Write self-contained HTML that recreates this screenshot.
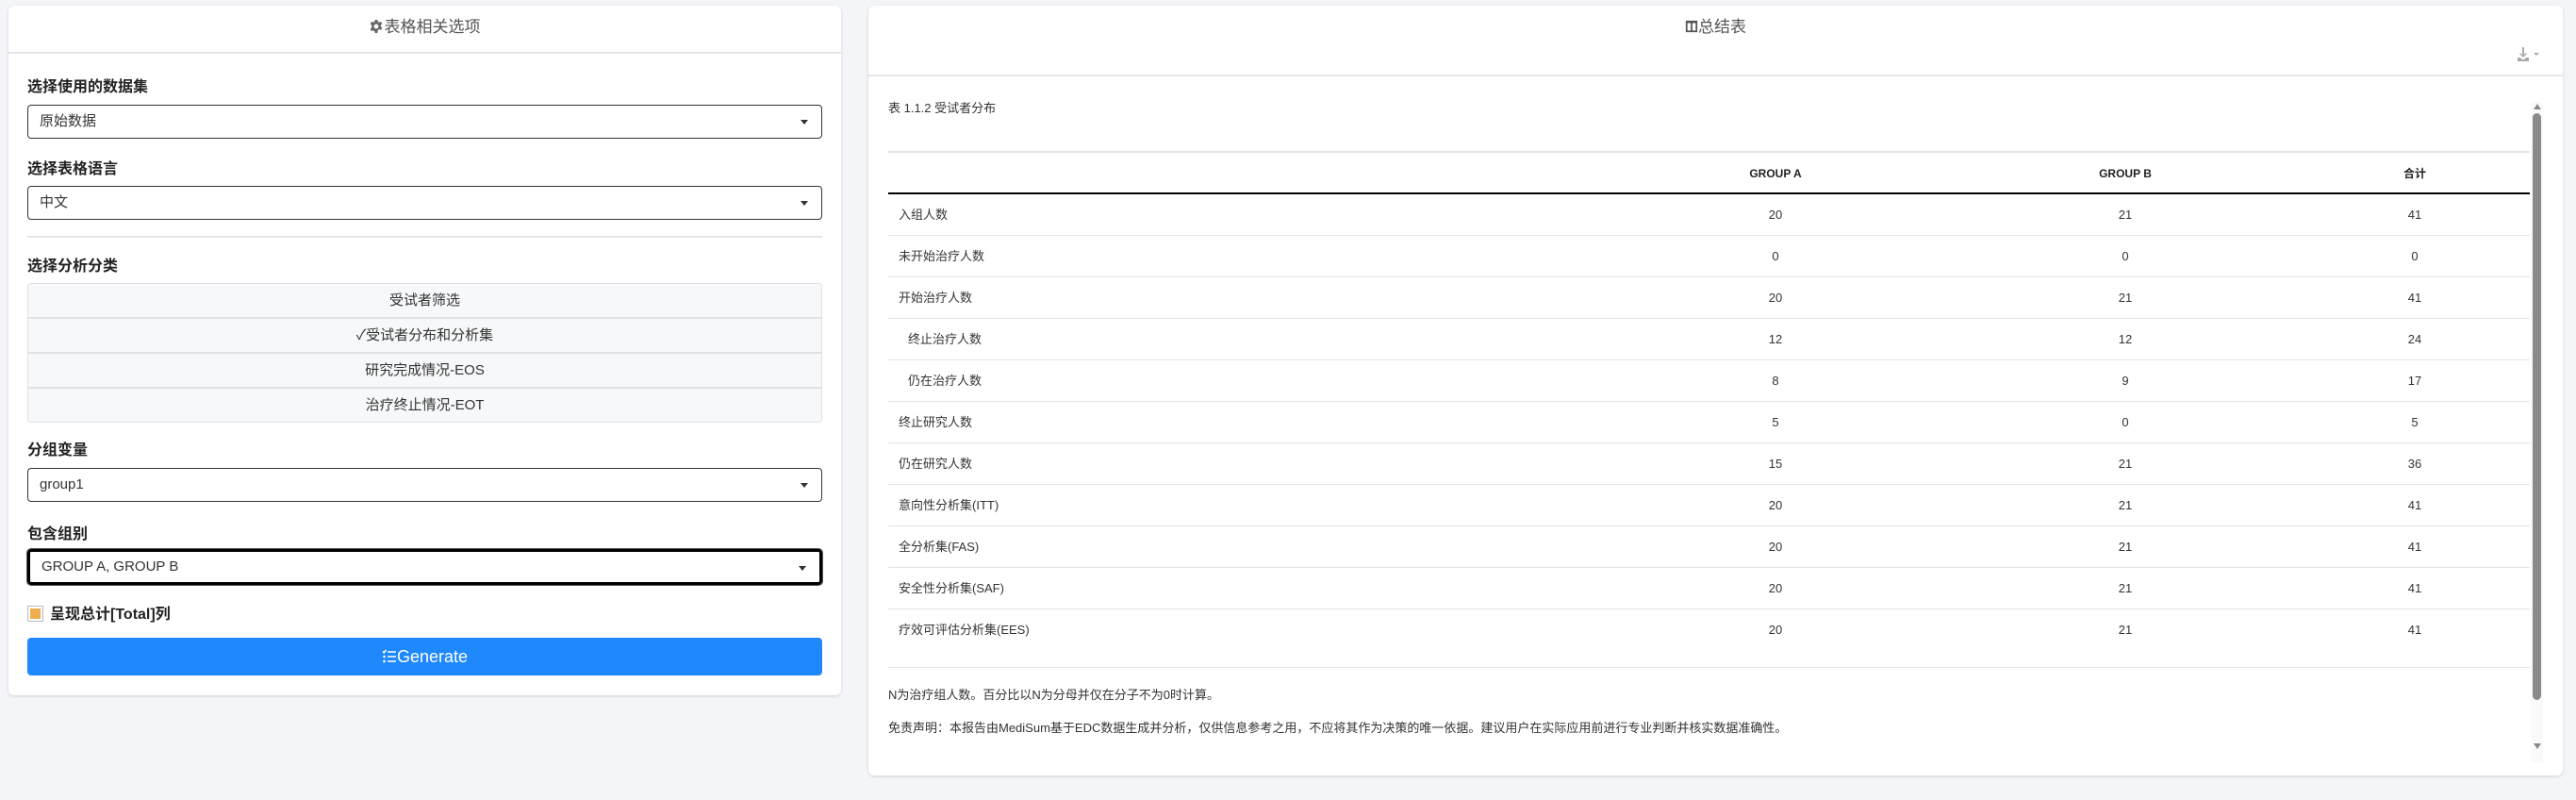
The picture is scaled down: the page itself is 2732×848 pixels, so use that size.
<!DOCTYPE html>
<html><head><meta charset="utf-8"><style>
*{box-sizing:border-box;margin:0;padding:0}
body{width:2732px;height:848px;background:#f4f5f9;font-family:"Liberation Sans","Noto Sans CJK SC",sans-serif;color:#222;position:relative;overflow:hidden}
.abs{position:absolute}
.card{position:absolute;background:#fff;border-radius:6px;box-shadow:0 1px 3px rgba(0,0,0,.15)}
.hdr{position:absolute;left:0;right:0;top:0;border-bottom:2px solid #e6e7ea;text-align:center;color:#555;font-size:17px}
.lbl{position:absolute;left:29px;font-size:16px;font-weight:bold;color:#222;line-height:20px}
.sel{position:absolute;left:29px;width:843px;height:36px;border:1.5px solid #333;border-radius:4px;font-size:15px;color:#333;padding:0 12px;line-height:33px}
.sel:after{content:"";position:absolute;right:14px;top:15px;border:4px solid transparent;border-top:5px solid #333}
.li{position:absolute;left:29px;width:843px;height:37px;background:#f7f8fa;border:1px solid #dfe1e5;text-align:center;font-size:15px;color:#333;line-height:35px}
.row{position:absolute;left:942px;width:1741px;height:44px;line-height:44px;border-bottom:1.5px solid #e3e4e6;font-size:13px;color:#333}
.row span{position:absolute;top:0;line-height:44px}
.c1{left:11px}.c2{left:900px;width:82px;text-align:center}.c3{left:1271px;width:82px;text-align:center}.c4{left:1578px;width:82px;text-align:center}
</style></head><body>

<div class="card" style="left:9px;top:6px;width:883px;height:731px">
 <div class="hdr" style="height:51px;line-height:45px">
  <svg width="14" height="14" viewBox="0 0 16 16" style="vertical-align:-1px;margin-right:2px"><path fill="#666" d="M6.5 0h3l.5 2.2 1.6.9 2.1-.8 1.5 2.6-1.7 1.5v1.8l1.7 1.5-1.5 2.6-2.1-.8-1.6.9L9.5 16h-3L6 13.8l-1.6-.9-2.1.8L.8 11.1 2.5 9.6V6.4L.8 4.9 2.3 2.3l2.1.8L6 2.2zM8 5.2A2.8 2.8 0 1 0 8 10.8 2.8 2.8 0 0 0 8 5.2z"/></svg>表格相关选项
 </div>
</div>
<div class="lbl" style="top:83px">选择使用的数据集</div>
<div class="sel" style="top:111px">原始数据</div>
<div class="lbl" style="top:170px">选择表格语言</div>
<div class="sel" style="top:197px">中文</div>
<div class="abs" style="left:29px;top:250px;width:843px;height:1.5px;background:#e3e4e6"></div>
<div class="lbl" style="top:273px">选择分析分类</div>
<div class="li" style="top:300px;border-radius:4px 4px 0 0">受试者筛选</div>
<div class="li" style="top:337px">✓受试者分布和分析集</div>
<div class="li" style="top:374px">研究完成情况-EOS</div>
<div class="li" style="top:411px;border-radius:0 0 4px 4px">治疗终止情况-EOT</div>
<div class="lbl" style="top:468px">分组变量</div>
<div class="sel" style="top:496px">group1</div>
<div class="lbl" style="top:557px">包含组别</div>
<div class="sel" style="top:582px;height:38px;border:3px solid #000;box-shadow:0 0 0 1px #555;line-height:32px">GROUP A, GROUP B</div>
<div class="abs" style="left:29px;top:642px;width:17px;height:17px;border:1px solid #bbb;background:#fff"><div style="margin:2px;width:11px;height:11px;background:#f0ad4e"></div></div>
<div class="lbl" style="left:53px;top:642px">呈现总计[Total]列</div>
<div class="abs" style="left:29px;top:676px;width:843px;height:40px;background:#1e88fc;border-radius:4px;color:#fff;font-size:18px;text-align:center;line-height:40px">
 <svg width="16" height="16" viewBox="0 0 16 16" style="vertical-align:-2px"><path fill="none" stroke="#fff" stroke-width="1.6" d="M1 2.5l1.3 1.3L4.5 1M6 3h9M6 8h9M6 13h9"/><circle cx="2.5" cy="8" r="1.3" fill="#fff"/><circle cx="2.5" cy="13" r="1.3" fill="#fff"/></svg>Generate
</div>

<div class="card" style="left:921px;top:6px;width:1797px;height:816px">
 <div class="hdr" style="height:75px;line-height:45px">
  <svg width="14" height="14" viewBox="0 0 16 16" style="vertical-align:-1px"><path fill="#555" d="M1 1h14v14H1zM3 4v9h4V4zm6 0v9h4V4z"/></svg>总结表
 </div>
 <svg class="abs" style="left:1748px;top:44px" width="26" height="16" viewBox="0 0 26 16"><path fill="#aaa" d="M6 0h2v8l2-2 1 1-4 4-4-4 1-1 2 2zM1 11h3l2 2h2l2-2h3v4H1z"/><path fill="#aaa" d="M18 6h6l-3 3z"/></svg>
 <div class="abs" style="left:1763px;top:102px;width:13px;height:700px;background:#fafafa"></div>
 <div class="abs" style="left:1766px;top:100px;border:4px solid transparent;border-bottom:6px solid #888"></div>
 <div class="abs" style="left:1765px;top:114px;width:9px;height:622px;background:#8a8a8a;border-radius:5px"></div>
 <div class="abs" style="left:1766px;top:782px;border:4px solid transparent;border-top:6px solid #888"></div>
</div>

<div class="abs" style="left:942px;top:104px;font-size:13px;color:#333">表 1.1.2 受试者分布</div>
<div class="abs" style="left:942px;top:160px;width:1741px;height:1.5px;background:#e3e4e6"></div>
<div class="row" style="top:162px;border-bottom:2.5px solid #000;font-weight:bold;font-size:12px;color:#222">
 <span class="c2">GROUP A</span><span class="c3">GROUP B</span><span class="c4">合计</span></div>

<div class="row" style="top:206px"><span class="c1">入组人数</span><span class="c2">20</span><span class="c3">21</span><span class="c4">41</span></div>
<div class="row" style="top:250px"><span class="c1">未开始治疗人数</span><span class="c2">0</span><span class="c3">0</span><span class="c4">0</span></div>
<div class="row" style="top:294px"><span class="c1">开始治疗人数</span><span class="c2">20</span><span class="c3">21</span><span class="c4">41</span></div>
<div class="row" style="top:338px"><span class="c1" style="left:21px">终止治疗人数</span><span class="c2">12</span><span class="c3">12</span><span class="c4">24</span></div>
<div class="row" style="top:382px"><span class="c1" style="left:21px">仍在治疗人数</span><span class="c2">8</span><span class="c3">9</span><span class="c4">17</span></div>
<div class="row" style="top:426px"><span class="c1">终止研究人数</span><span class="c2">5</span><span class="c3">0</span><span class="c4">5</span></div>
<div class="row" style="top:470px"><span class="c1">仍在研究人数</span><span class="c2">15</span><span class="c3">21</span><span class="c4">36</span></div>
<div class="row" style="top:514px"><span class="c1">意向性分析集(ITT)</span><span class="c2">20</span><span class="c3">21</span><span class="c4">41</span></div>
<div class="row" style="top:558px"><span class="c1">全分析集(FAS)</span><span class="c2">20</span><span class="c3">21</span><span class="c4">41</span></div>
<div class="row" style="top:602px"><span class="c1">安全性分析集(SAF)</span><span class="c2">20</span><span class="c3">21</span><span class="c4">41</span></div>
<div class="row" style="top:646px;height:62px"><span class="c1">疗效可评估分析集(EES)</span><span class="c2">20</span><span class="c3">21</span><span class="c4">41</span></div>

<div class="abs" style="left:942px;top:726px;font-size:13px;color:#333">N为治疗组人数。百分比以N为分母并仅在分子不为0时计算。</div>
<div class="abs" style="left:942px;top:761px;font-size:13px;color:#333">免责声明：本报告由MediSum基于EDC数据生成并分析，仅供信息参考之用，不应将其作为决策的唯一依据。建议用户在实际应用前进行专业判断并核实数据准确性。</div>
</body></html>
